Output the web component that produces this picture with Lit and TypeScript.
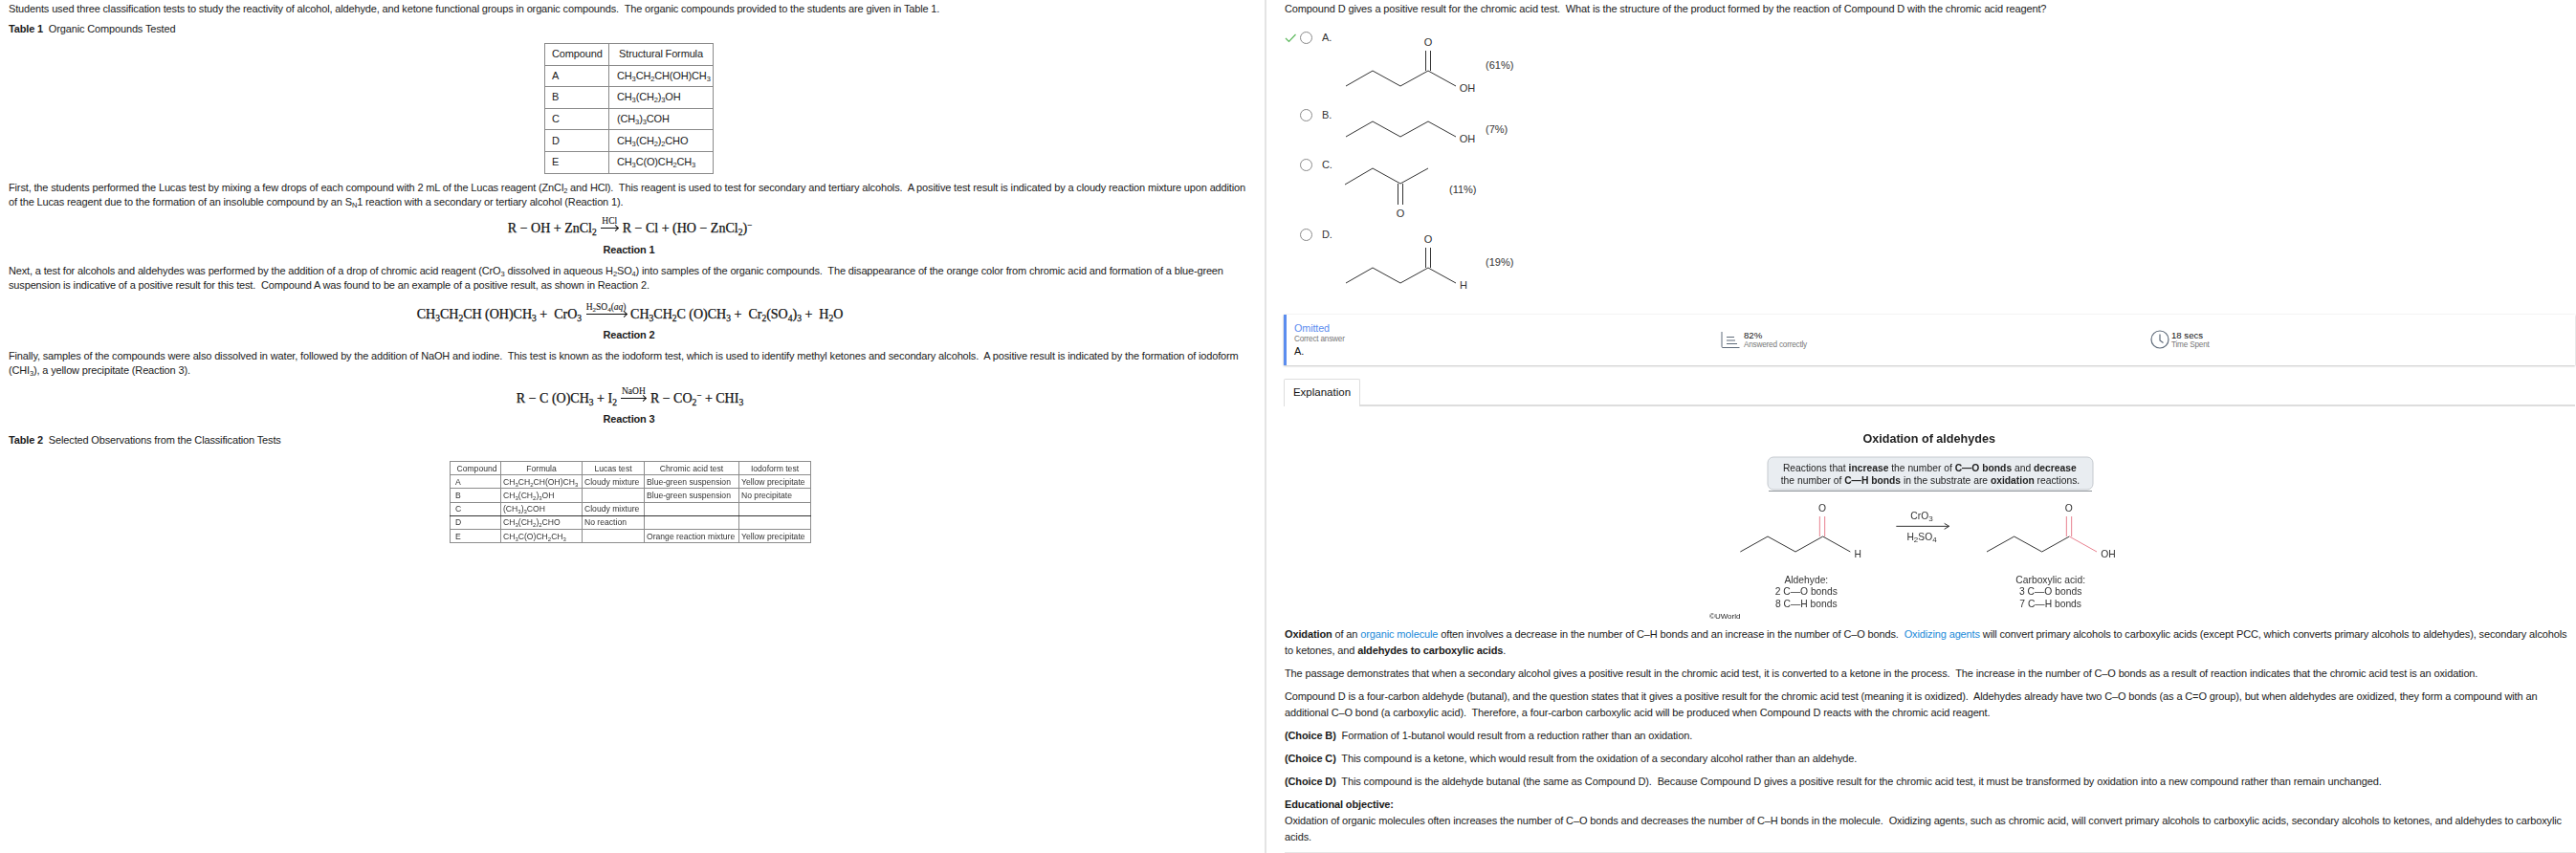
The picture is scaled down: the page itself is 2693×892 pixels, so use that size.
import { LitElement, html, css, svg } from "lit";
import { customElement } from "lit/decorators.js";

const bond = (pts: number[][], cls = "bond") =>
  svg`<polyline class=${cls} points=${pts.map((p) => p.join(",")).join(" ")}></polyline>`;

const acidLike = (label: string, labelX: number, pct: string) => svg`
  ${bond([[7,57],[35,41],[64,57],[93,41],[122,57]])}
  ${bond([[90.5,20],[90.5,41]])}${bond([[95.5,20],[95.5,41]])}
  <text class="mid" x="93" y="15">O</text>
  <text class="mid" x=${labelX} y="63">${label}</text>
  <text x="153" y="39">${pct}</text>`;

const OPTIONS = [
  { key: "A.", h: 81, correct: true, art: acidLike("OH", 134, "(61%)") },
  {
    key: "B.", h: 52, correct: false,
    art: svg`${bond([[7,29],[35,13],[64,29],[93,13],[122,29]])}
      <text class="mid" x="134" y="35">OH</text><text x="153" y="25">(7%)</text>`,
  },
  {
    key: "C.", h: 73, correct: false,
    art: svg`${bond([[6,27],[35,10],[64,26],[93,10]])}
      ${bond([[61.5,26],[61.5,48]])}${bond([[66.5,26],[66.5,48]])}
      <text class="mid" x="64" y="61">O</text><text x="115" y="36">(11%)</text>`,
  },
  { key: "D.", h: 90, correct: false, art: acidLike("H", 130, "(19%)") },
];

const T1 = [
  ["A", html`CH<sub>3</sub>CH<sub>2</sub>CH(OH)CH<sub>3</sub>`],
  ["B", html`CH<sub>3</sub>(CH<sub>2</sub>)<sub>3</sub>OH`],
  ["C", html`(CH<sub>3</sub>)<sub>3</sub>COH`],
  ["D", html`CH<sub>3</sub>(CH<sub>2</sub>)<sub>2</sub>CHO`],
  ["E", html`CH<sub>3</sub>C(O)CH<sub>2</sub>CH<sub>3</sub>`],
];

const T2 = [
  ["Cloudy mixture", "Blue-green suspension", "Yellow precipitate"],
  ["", "Blue-green suspension", "No precipitate"],
  ["Cloudy mixture", "", ""],
  ["No reaction", "", ""],
  ["", "Orange reaction mixture", "Yellow precipitate"],
];

@customElement("app-root")
export class AppRoot extends LitElement {
  static styles = css`
    :host { display: block; width: 2693px; height: 892px; overflow: hidden; background: #fff; color: #1a1a1a;
      font-family: "Liberation Sans", Arial, sans-serif; font-size: 11px; letter-spacing: -0.13px; }
    .page { display: grid; grid-template-columns: 1322px 1fr; height: 892px; }
    .left { padding: 1.5px 14px 0 9px; line-height: 15px; letter-spacing: -0.15px; }
    .right { border-left: 2px solid #e4e4e4; padding: 0.5px 1px 0 19px; line-height: 17px; }
    p { margin: 0; }
    sub { font-size: 7.5px; line-height: 0; vertical-align: -2px; }
    .tight { margin-top: 6px; font-weight: 700; }
    .tight span { font-weight: 400; }
    .gap7 { margin-top: 7px; }
    .t1 { border-collapse: collapse; margin: 7.5px 0 0 560px; font-size: 11px; table-layout: fixed; width: 176px; }
    .t1 td { border: 1px solid #8a8a8a; height: 22.6px; padding: 0 0 0 7px; box-sizing: border-box; white-space: nowrap; }
    .t1 .c1 { width: 67px; }
    .t1 .c2 { width: 109px; padding-left: 8px; }
    .t1 .hd2 { text-align: center; padding: 0; }
    .para { margin-top: 7px; }
    .eq { text-align: center; font-family: "Liberation Serif", serif; font-size: 14px; letter-spacing: 0;
      box-sizing: border-box; color: #111; white-space: pre; -webkit-text-stroke: 0.25px #111; }
    .e1 { height: 28px; padding-top: 12px; line-height: 16px; }
    .e2 { height: 30px; padding-top: 15px; line-height: 15px; }
    .e3 { height: 29px; padding-top: 14px; line-height: 15px; }
    .eq sub { font-size: 9.5px; vertical-align: -2.5px; }
    .eq sup { font-size: 9px; line-height: 0; vertical-align: 5px; }
    .arrow { display: inline-block; position: relative; height: 1px; background: #111; vertical-align: 3.5px; margin: 0 1px; }
    .a18 { width: 18px; }
    .a42 { width: 42px; }
    .a26 { width: 26px; }
    .arrow::after { content: ""; position: absolute; right: 0; top: -2px; width: 4px; height: 4px; border-top: 1px solid #111;
      border-right: 1px solid #111; transform: rotate(45deg); }
    .over { position: absolute; left: 50%; bottom: 3px; transform: translateX(-50%); font-size: 9.5px; line-height: 10px; -webkit-text-stroke: 0.1px #111; }
    .over sub { font-size: 7px; vertical-align: -1.5px; }
    .label { text-align: center; font-weight: 700; margin-top: 7px; padding-right: 2px; }
    .t2 { border-collapse: collapse; margin: 14.5px 0 0 461px; font-size: 8.6px; letter-spacing: 0; color: #333; filter: blur(0.3px); table-layout: fixed; width: 377px; }
    .t2 td { border: 1px solid #8c8c8c; height: 14.2px; padding: 0 2px; white-space: nowrap; box-sizing: border-box; line-height: 10px; }
    .t2 td:first-child { padding-left: 5px; }
    .t2 .h td { text-align: center; }
    .t2 sub { font-size: 6px; vertical-align: -2px; }
    .t2 .thick td { border-bottom-color: #333; }
    .cw1 { width: 53px; }
    .cw2 { width: 85px; }
    .cw3 { width: 65px; }
    .cw4 { width: 99px; }
    .cw5 { width: 75px; }
    .opts { margin-top: 15px; }
    .opt { display: flex; align-items: flex-start; }
    .check { width: 14px; height: 14px; flex: none; }
    .check svg { display: block; }
    .check polyline { fill: none; stroke: #5cb85c; stroke-width: 1.2; }
    .radio { width: 13px; height: 13px; border: 1px solid #8a8a8a; border-radius: 50%; margin-left: 2px; flex: none; box-sizing: border-box; }
    .key { width: 18px; margin-left: 10px; flex: none; line-height: 13px; color: #333; }
    .art { overflow: visible; display: block; flex: none; font-size: 11px; letter-spacing: 0; fill: #333; }
    .bond { fill: none; stroke: #333; stroke-width: 1; }
    .mid { text-anchor: middle; }
    .bar { display: flex; height: 53px; margin-left: -1px; border-left: 3px solid #5b8def; box-shadow: 0 0 2px rgba(0,0,0,.1), 0 1px 2px rgba(0,0,0,.2);
      box-sizing: border-box; padding-left: 8px; }
    .stat1 { flex: 0 0 446px; }
    .stat2 { flex: 0 0 449px; }
    .status { color: #5b8def; font-size: 10.8px; margin-top: 8px; line-height: 13px; }
    .small { font-size: 8.2px; letter-spacing: -0.2px; color: #777; line-height: 10px; }
    .ans { font-size: 11px; line-height: 14px; color: #111; }
    .stat { display: flex; align-items: center; gap: 4px; height: 100%; }
    .stat.time { gap: 2px; }
    .stat .v { font-size: 9.6px; letter-spacing: 0; line-height: 11px; color: #111; }
    .stat svg { flex: none; }
    .tabs { margin-top: 14px; height: 29px; border-bottom: 2px solid #ddd; box-sizing: border-box; margin-left: -1px; }
    .tab { width: 80px; height: 29px; border: 1px solid #ddd; border-bottom: 0; border-radius: 2px 2px 0 0; background: #fff; display: flex;
      align-items: center; justify-content: center; box-sizing: border-box; color: #111; font-size: 11.5px; letter-spacing: 0; }
    .fig { display: block; margin: 15px 0 0 417px; font-size: 10.3px; letter-spacing: 0; fill: #333; filter: blur(0.25px); }
    .fig .bold { font-weight: 700; }
    .fig .title { font-size: 12.6px; font-weight: 700; fill: #222; text-anchor: middle; }
    .fig .pink { fill: none; stroke: #e8808f; stroke-width: 1; }
    .fig .dark { fill: #222; }
    .fig .mark { font-size: 8px; fill: #222; }
    .body { margin-top: 7px; }
    .body p { margin-bottom: 7px; }
    .body p.head { margin-bottom: 0; }
    a { color: #1a8ad8; text-decoration: none; }
    .endbar { height: 4px; background: #e6e6e6; }
  `;

  private fig() {
    const a = (x: number, y: number) => `${x / 3},${y / 3}`;
    const pl = (pts: number[][], c = "bond") =>
      svg`<polyline class=${c} points=${pts.map((p) => a(p[0], p[1])).join(" ")}></polyline>`;
    const t = (x: number, y: number, s: string) =>
      svg`<text class="mid" x=${x / 3} y=${y / 3 + 4}>${s}</text>`;
    return html`<svg class="fig" width="500" height="208" viewBox="0 0 500 208">
      <text class="title" x="256.7" y="23">Oxidation of aldehydes</text>
      <rect x="88" y="38" width="340" height="34" rx="6" fill="#e9edf1" stroke="#c4c9ce"></rect>
      <path d="M89 73.5h338" stroke="#8f959b" stroke-width="1" fill="none"></path>
      <text class="mid dark" x="257.3" y="52.5">Reactions that <tspan class="bold">increase</tspan> the number of <tspan class="bold">C—O bonds</tspan> and <tspan class="bold">decrease</tspan></text>
      <text class="mid dark" x="258" y="65.5">the number of <tspan class="bold">C—H bonds</tspan> in the substrate are <tspan class="bold">oxidation</tspan> reactions.</text>
      ${pl([[178,411],[264,363],[351,411],[437,363],[523,411]])}
      ${pl([[427,300],[427,363]], "pink")}${pl([[443,300],[443,363]], "pink")}
      ${t(435,274,"O")}${t(547,418,"H")}
      ${pl([[667,331],[833,331]])}${pl([[818,322],[833,331],[818,340]])}
      <text class="mid" x="249" y="103">CrO<tspan font-size="8" dy="2">3</tspan></text>
      <text class="mid" x="249" y="125">H<tspan font-size="8" dy="2">2</tspan><tspan dy="-2">SO</tspan><tspan font-size="8" dy="2">4</tspan></text>
      ${pl([[951,411],[1037,363],[1124,411],[1210,363]])}
      ${pl([[1210,363],[1296,411]], "pink")}
      ${pl([[1201,300],[1201,363]], "pink")}${pl([[1217,300],[1217,363]], "pink")}
      ${t(1208,274,"O")}${t(1332,418,"OH")}
      ${t(385,497,"Aldehyde:")}${t(385,535,"2 C—O bonds")}${t(385,573,"8 C—H bonds")}
      ${t(1151,497,"Carboxylic acid:")}${t(1151,535,"3 C—O bonds")}${t(1151,573,"7 C—H bonds")}
      <text class="mark" x="27" y="207">©UWorld</text>
    </svg>`;
  }

  render() {
    return html`<div class="page">
      <section class="left">
        <p>Students used three classification tests to study the reactivity of alcohol, aldehyde, and ketone functional groups in organic compounds.&nbsp; The organic compounds provided to the students are given in Table 1.</p>
        <p class="tight">Table 1&nbsp; <span>Organic Compounds Tested</span></p>
        <table class="t1">
          <tr><td class="c1">Compound</td><td class="c2 hd2">Structural Formula</td></tr>
          ${T1.map((r) => html`<tr><td>${r[0]}</td><td class="c2">${r[1]}</td></tr>`)}
        </table>
        <p class="para">First, the students performed the Lucas test by mixing a few drops of each compound with 2 mL of the Lucas reagent (ZnCl<sub>2</sub> and HCl).&nbsp; This reagent is used to test for secondary and tertiary alcohols.&nbsp; A positive test result is indicated by a cloudy reaction mixture upon addition of the Lucas reagent due to the formation of an insoluble compound by an S<sub>N</sub>1 reaction with a secondary or tertiary alcohol (Reaction 1).</p>
        <div class="eq e1">R − OH + ZnCl<sub>2</sub> <span class="arrow a18"><span class="over">HCl</span></span> R − Cl + (HO − ZnCl<sub>2</sub>)<sup>−</sup></div>
        <div class="label">Reaction 1</div>
        <p class="para">Next, a test for alcohols and aldehydes was performed by the addition of a drop of chromic acid reagent (CrO<sub>3</sub> dissolved in aqueous H<sub>2</sub>SO<sub>4</sub>) into samples of the organic compounds.&nbsp; The disappearance of the orange color from chromic acid and formation of a blue-green suspension is indicative of a positive result for this test.&nbsp; Compound A was found to be an example of a positive result, as shown in Reaction 2.</p>
        <div class="eq e2">CH<sub>3</sub>CH<sub>2</sub>CH (OH)CH<sub>3</sub> +  CrO<sub>3</sub> <span class="arrow a42"><span class="over">H<sub>2</sub>SO<sub>4</sub>(<i>aq</i>)</span></span> CH<sub>3</sub>CH<sub>2</sub>C (O)CH<sub>3</sub> +  Cr<sub>2</sub>(SO<sub>4</sub>)<sub>3</sub> +  H<sub>2</sub>O</div>
        <div class="label">Reaction 2</div>
        <p class="para">Finally, samples of the compounds were also dissolved in water, followed by the addition of NaOH and iodine.&nbsp; This test is known as the iodoform test, which is used to identify methyl ketones and secondary alcohols.&nbsp; A positive result is indicated by the formation of iodoform (CHI<sub>3</sub>), a yellow precipitate (Reaction 3).</p>
        <div class="eq e3">R − C (O)CH<sub>3</sub> + I<sub>2</sub> <span class="arrow a26"><span class="over">NaOH</span></span> R − CO<sub>2</sub><sup>−</sup> + CHI<sub>3</sub></div>
        <div class="label">Reaction 3</div>
        <p class="tight gap7">Table 2&nbsp; <span>Selected Observations from the Classification Tests</span></p>
        <table class="t2">
          <colgroup><col class="cw1"><col class="cw2"><col class="cw3"><col class="cw4"><col class="cw5"></colgroup>
          <tr class="h"><td>Compound</td><td>Formula</td><td>Lucas test</td><td>Chromic acid test</td><td>Iodoform test</td></tr>
          ${T2.map((r, i) => html`<tr class=${i === 2 ? "thick" : ""}><td>${T1[i][0]}</td><td>${T1[i][1]}</td>${r.map((c) => html`<td>${c}</td>`)}</tr>`)}
        </table>
      </section>
      <section class="right">
        <p>Compound D gives a positive result for the chromic acid test.&nbsp; What is the structure of the product formed by the reaction of Compound D with the chromic acid reagent?</p>
        <div class="opts">
          ${OPTIONS.map((o) => html`<div class="opt" style="height:${o.h}px">
            <span class="check">${o.correct ? html`<svg width="14" height="14"><polyline points="1,7 4.5,10.5 11.5,3"></polyline></svg>` : ""}</span>
            <span class="radio"></span><span class="key">${o.key}</span>
            <svg class="art" width="190" height=${o.h}>${o.art}</svg>
          </div>`)}
        </div>
        <div class="bar">
          <div class="stat1">
            <div class="status">Omitted</div>
            <div class="small">Correct answer</div>
            <div class="ans">A.</div>
          </div>
          <div class="stat stat2">
            <svg width="20" height="20" viewBox="0 0 20 20" fill="none" stroke="#5f6b7a"><path d="M1 2v15.5q0 1 1 1h17.5"/><path d="M6 7.5h8M6 11h9M6 14.5h11" stroke-width="1.1"/></svg>
            <div><div class="v">82%</div><div class="small">Answered correctly</div></div>
          </div>
          <div class="stat time">
            <svg width="20" height="20" viewBox="0 0 20 20" fill="none" stroke="#5f6b7a" stroke-width="1.2"><circle cx="10" cy="10" r="9"/><path d="M10 4.5V11l3.5 2.5"/></svg>
            <div><div class="v">18 secs</div><div class="small">Time Spent</div></div>
          </div>
        </div>
        <div class="tabs"><div class="tab">Explanation</div></div>
        ${this.fig()}
        <div class="body">
          <p><b>Oxidation</b> of an <a>organic molecule</a> often involves a decrease in the number of C–H bonds and an increase in the number of C–O bonds.&nbsp; <a>Oxidizing agents</a> will convert primary alcohols to carboxylic acids (except PCC, which converts primary alcohols to aldehydes), secondary alcohols to ketones, and <b>aldehydes to carboxylic acids</b>.</p>
          <p>The passage demonstrates that when a secondary alcohol gives a positive result in the chromic acid test, it is converted to a ketone in the process.&nbsp; The increase in the number of C–O bonds as a result of reaction indicates that the chromic acid test is an oxidation.</p>
          <p>Compound D is a four-carbon aldehyde (butanal), and the question states that it gives a positive result for the chromic acid test (meaning it is oxidized).&nbsp; Aldehydes already have two C–O bonds (as a C=O group), but when aldehydes are oxidized, they form a compound with an additional C–O bond (a carboxylic acid).&nbsp; Therefore, a four-carbon carboxylic acid will be produced when Compound D reacts with the chromic acid reagent.</p>
          <p><b>(Choice B)</b>&nbsp; Formation of 1-butanol would result from a reduction rather than an oxidation.</p>
          <p><b>(Choice C)</b>&nbsp; This compound is a ketone, which would result from the oxidation of a secondary alcohol rather than an aldehyde.</p>
          <p><b>(Choice D)</b>&nbsp; This compound is the aldehyde butanal (the same as Compound D).&nbsp; Because Compound D gives a positive result for the chromic acid test, it must be transformed by oxidation into a new compound rather than remain unchanged.</p>
          <p class="head"><b>Educational objective:</b></p>
          <p>Oxidation of organic molecules often increases the number of C–O bonds and decreases the number of C–H bonds in the molecule.&nbsp; Oxidizing agents, such as chromic acid, will convert primary alcohols to carboxylic acids, secondary alcohols to ketones, and aldehydes to carboxylic acids.</p>
          <div class="endbar"></div>
        </div>
      </section>
    </div>`;
  }
}
